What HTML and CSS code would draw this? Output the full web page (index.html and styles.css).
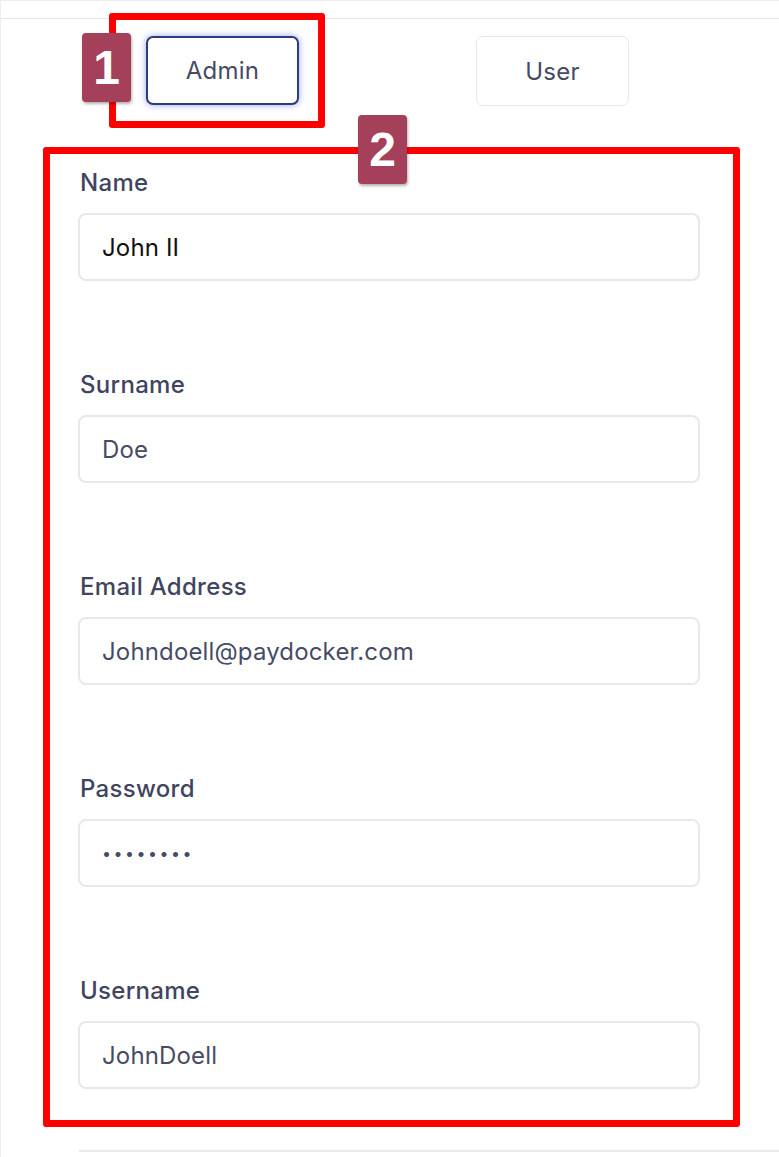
FILE: index.html
```html
<!DOCTYPE html>
<html lang="en">

<head>
    <meta charset="UTF-8">
    <meta name="viewport" content="width=device-width, initial-scale=1.0">
    <title>Add account</title>
    <link rel="stylesheet" href="styles.css">
</head>

<body>
    <div class="page">
        <!-- thanh trên cùng -->
        <div class="topbar"></div>

        <!-- chọn loại tài khoản -->
        <div class="tabs">
            <button class="tab tab-active" type="button">Admin</button>
            <button class="tab" type="button">User</button>
        </div>

        <!-- form thông tin -->
        <form class="profile-form">
            <div class="field">
                <label for="name">Name</label>
                <input type="text" id="name" class="input input-dark" value="John II">
            </div>
            <div class="field">
                <label for="surname">Surname</label>
                <input type="text" id="surname" class="input" value="Doe">
            </div>
            <div class="field">
                <label for="email">Email Address</label>
                <input type="email" id="email" class="input" value="Johndoell@paydocker.com">
            </div>
            <div class="field">
                <label for="password">Password</label>
                <input type="password" id="password" class="input input-password" value="password">
            </div>
            <div class="field">
                <label for="username">Username</label>
                <input type="text" id="username" class="input" value="JohnDoell">
            </div>
        </form>

        <div class="footer-line"></div>

        <!-- khung chú thích -->
        <div class="mark mark-1"></div>
        <div class="mark mark-2"></div>
        <span class="badge badge-1">1</span>
        <span class="badge badge-2">2</span>
    </div>
</body>

</html>
```

FILE: styles.css
```css
/* Trang */
body {
    margin: 0;
    background: #fff;
    font-family: Inter, "Noto Sans", sans-serif;
}

.page {
    position: relative;
    min-height: 1157px;
    border-left: 1px solid #eceef1;
    border-top: 1px solid #eceef1;
    box-sizing: border-box;
}

.topbar {
    height: 17px;
    border-bottom: 1px solid #e3e7ed;
}

/* Tabs */
.tabs {
    display: flex;
    gap: 177px;
    padding: 17px 0 0 145px;
}

.tab {
    width: 153px;
    height: 70px;
    background: #fff;
    border: 1px solid #e6e8ec;
    border-radius: 7px;
    font-family: Inter, sans-serif;
    font-size: 24px;
    letter-spacing: 0.2px;
    color: #454b65;
    cursor: pointer;
}

.tab-active {
    height: 69px;
    border: 2px solid #2d3a80;
    box-shadow: 0 0 7px rgba(70, 90, 200, 0.55);
}

/* Form */
.profile-form {
    display: flex;
    flex-direction: column;
    gap: 89px;
    padding: 62px 0 0 77px;
    width: 622px;
}

.field label {
    display: block;
    margin: 0 0 15px 2px;
    font-size: 24px;
    line-height: 30px;
    letter-spacing: 0.3px;
    font-weight: 500;
    color: #3f4560;
}

.input {
    display: block;
    width: 100%;
    height: 68px;
    box-sizing: border-box;
    padding: 0 22px;
    border: 2px solid #e7e8eb;
    border-radius: 8px;
    font-family: Inter, sans-serif;
    font-size: 24px;
    letter-spacing: 0.15px;
    color: #474c66;
    background: #fff;
}

.input-dark {
    color: #111;
}

.input-password {
    font-size: 16px;
    letter-spacing: 2.5px;
}

.footer-line {
    margin: 61px 0 0 78px;
    border-top: 2px solid #e6e9ee;
}

/* Chú thích đỏ */
.mark {
    position: absolute;
    border: 7px solid #ff0000;
    border-radius: 3px;
    box-sizing: border-box;
}

.mark-1 {
    left: 108px;
    top: 12px;
    width: 216px;
    height: 115px;
}

.mark-2 {
    left: 42px;
    top: 146px;
    width: 697px;
    height: 980px;
}

.badge {
    position: absolute;
    width: 49px;
    height: 69px;
    background: #a4405a;
    border-radius: 4px;
    box-shadow: 1px 2px 3px rgba(0, 0, 0, 0.3);
    color: #fff;
    font-family: "Liberation Sans", Arial, sans-serif;
    font-weight: 700;
    font-size: 48px;
    line-height: 69px;
    text-align: center;
}

.badge-1 {
    left: 81px;
    top: 32px;
}

.badge-2 {
    left: 357px;
    top: 114px;
}
```
